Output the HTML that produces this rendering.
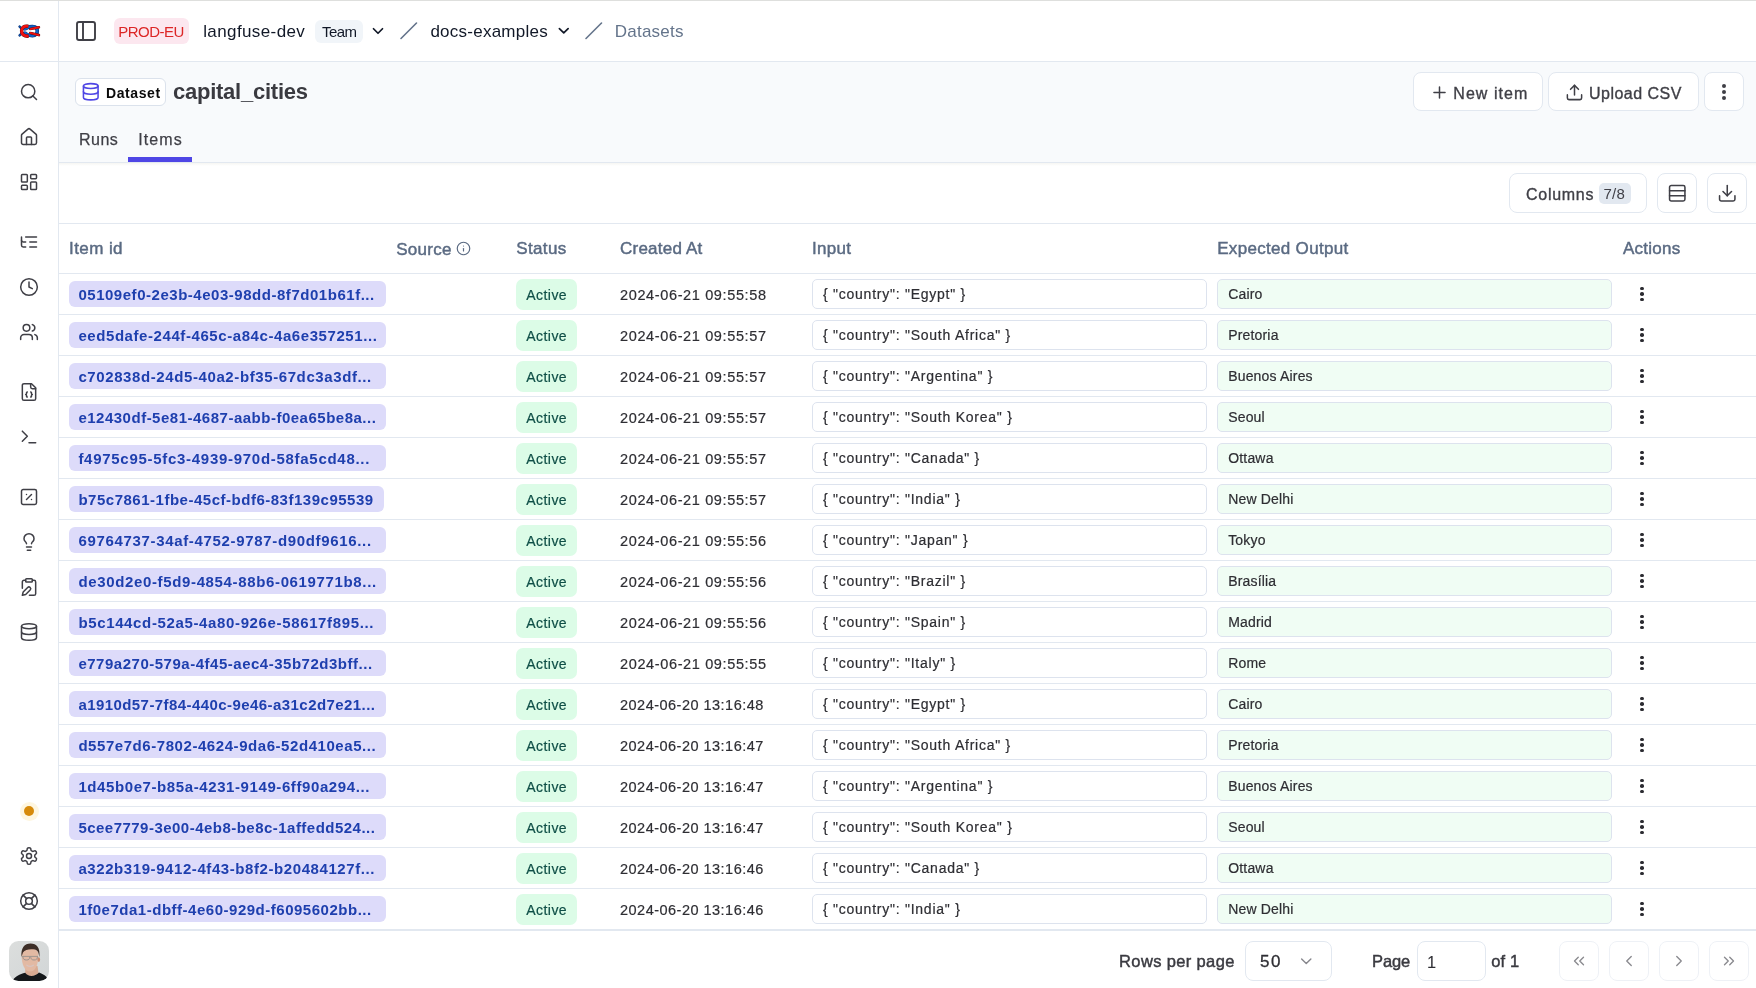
<!DOCTYPE html>
<html><head><meta charset="utf-8"><title>capital_cities - Langfuse</title>
<style>
#root{position:absolute;left:0;top:0;width:1756px;height:988px;will-change:transform}
*{box-sizing:border-box;margin:0;padding:0}
html,body{width:1756px;height:988px;overflow:hidden;background:#fff}
body{position:relative;font-family:"Liberation Sans",sans-serif;color:#2e2e33;-webkit-font-smoothing:antialiased}
.a{position:absolute;white-space:nowrap}
.ic{position:absolute;display:block}
.t{position:absolute;white-space:nowrap;line-height:1}
.box{position:absolute;border:1px solid #e2e8f0;background:#fff}
</style></head><body><div id="root">

<div class="a" style="left:0;top:0;width:1756px;height:1px;background:#dedfdd"></div>
<div class="a" style="left:58px;top:1px;width:1px;height:987px;background:#e2e8f0"></div>
<div class="a" style="left:0;top:61px;width:1756px;height:1px;background:#e2e8f0"></div>
<div class="a" style="left:59px;top:62px;width:1697px;height:100px;background:#f8fafc"></div>
<div class="a" style="left:59px;top:162px;width:1697px;height:1px;background:#e2e8f0"></div>
<div class="a" style="left:59px;top:163px;width:1697px;height:3px;background:linear-gradient(#f6f6f3,#fff)"></div>
<svg class="ic" style="left:16px;top:21px;width:26px;height:20px" viewBox="0 0 26 20">
<path d="M3.6 5.6 5.2 7.2M3.6 14.4 5.2 12.8" stroke="#0b2f6e" stroke-width="2.4" stroke-linecap="round"/>
<path d="M3.6 5.6 5.2 7.2M3.6 14.4 5.2 12.8" stroke="#0d4fa8" stroke-width="1.6" stroke-linecap="round"/>
<path d="M8.3 9.3C9.8 6.3 13 5.6 16.5 5.6 19.6 5.6 21.3 7.4 21.3 10 21.3 12.6 19.6 14.6 16.5 14.6 13 14.6 9.8 13.7 8.3 10.7" fill="none" stroke="#0a2a66" stroke-width="3.6"/>
<path d="M8.3 9.3C9.8 6.3 13 5.6 16.5 5.6 19.6 5.6 21.3 7.4 21.3 10 21.3 12.6 19.6 14.6 16.5 14.6 13 14.6 9.8 13.7 8.3 10.7" fill="none" stroke="#0e62c8" stroke-width="2.7"/>
<path d="M12.3 5.3C8 4.6 5.6 6.6 5.6 10 5.6 13.4 8 15.4 12.6 15.1" fill="none" stroke="#5a0a0a" stroke-width="3.5"/>
<path d="M12.3 5.3C8 4.6 5.6 6.6 5.6 10 5.6 13.4 8 15.4 12.6 15.1" fill="none" stroke="#f01010" stroke-width="2.7"/>
<path d="M14.3 8.1 22.9 6.3M14.3 11.9 22.9 14.1" fill="none" stroke="#5a0a0a" stroke-width="2.6" stroke-linecap="round"/>
<path d="M14.3 8.1 22.9 6.3M14.3 11.9 22.9 14.1" fill="none" stroke="#f01010" stroke-width="1.9" stroke-linecap="round"/>
<path d="M9.2 10H15" stroke="#f4f4f4" stroke-width="1.1"/>
</svg>
<svg class="ic" style="left:74.3px;top:18.8px;width:24px;height:24px" viewBox="0 0 24 24" fill="none" stroke="#3f3f46" stroke-width="1.9" stroke-linecap="round" stroke-linejoin="round" ><rect width="18" height="18" x="3" y="3" rx="2"/><path d="M9 3v18"/></svg>
<div class="a" style="left:114px;top:18px;width:75px;height:26px;background:#fce7ef;border-radius:6px"></div>
<span class="t" id="prod" style="left:118.3px;top:23.6px;letter-spacing:-0.517px;font-size:15px;color:#dc2626">PROD-EU</span>
<span class="t" id="lfdev" style="left:203.2px;top:22.5px;letter-spacing:0.391px;font-size:17px;color:#111827">langfuse-dev</span>
<div class="a" style="left:315px;top:20px;width:48px;height:22.5px;background:#f1f5f9;border-radius:6px"></div>
<span class="t" id="team" style="left:322.0px;top:23.6px;letter-spacing:-0.567px;font-size:15px;color:#111827">Team</span>
<svg class="ic" style="left:368.8px;top:22.2px;width:18px;height:18px" viewBox="0 0 24 24" fill="none" stroke="#111827" stroke-width="2.3" stroke-linecap="round" stroke-linejoin="round" ><path d="m6 9 6 6 6-6"/></svg>
<svg class="ic" style="left:399px;top:21px;width:20px;height:20px" viewBox="0 0 20 20"><path d="M2 17.5 17.5 2" stroke="#64748b" stroke-width="1.6" stroke-linecap="round"/></svg>
<span class="t" id="docs" style="left:430.4px;top:22.8px;letter-spacing:0.25px;font-size:17px;color:#111827">docs-examples</span>
<svg class="ic" style="left:554.55px;top:22.25px;width:17.5px;height:17.5px" viewBox="0 0 24 24" fill="none" stroke="#111827" stroke-width="2.3" stroke-linecap="round" stroke-linejoin="round" ><path d="m6 9 6 6 6-6"/></svg>
<svg class="ic" style="left:584px;top:21px;width:20px;height:20px" viewBox="0 0 20 20"><path d="M2 17.5 17.5 2" stroke="#64748b" stroke-width="1.6" stroke-linecap="round"/></svg>
<span class="t" id="dsets" style="left:614.8px;top:23.0px;letter-spacing:0.229px;font-size:17px;color:#64748b">Datasets</span>
<svg class="ic" style="left:19.0px;top:82.0px;width:20px;height:20px" viewBox="0 0 24 24" fill="none" stroke="#3f3f46" stroke-width="1.8" stroke-linecap="round" stroke-linejoin="round" ><circle cx="11" cy="11" r="8"/><path d="m21 21-4.3-4.3"/></svg>
<svg class="ic" style="left:19.0px;top:126.5px;width:20px;height:20px" viewBox="0 0 24 24" fill="none" stroke="#3f3f46" stroke-width="1.8" stroke-linecap="round" stroke-linejoin="round" ><path d="M15 21v-8a1 1 0 0 0-1-1h-4a1 1 0 0 0-1 1v8"/><path d="M3 10a2 2 0 0 1 .709-1.528l7-5.999a2 2 0 0 1 2.582 0l7 5.999A2 2 0 0 1 21 10v9a2 2 0 0 1-2 2H5a2 2 0 0 1-2-2z"/></svg>
<svg class="ic" style="left:19.0px;top:172.0px;width:20px;height:20px" viewBox="0 0 24 24" fill="none" stroke="#3f3f46" stroke-width="1.8" stroke-linecap="round" stroke-linejoin="round" ><rect width="7" height="9" x="3" y="3" rx="1"/><rect width="7" height="5" x="14" y="3" rx="1"/><rect width="7" height="9" x="14" y="12" rx="1"/><rect width="7" height="5" x="3" y="16" rx="1"/></svg>
<svg class="ic" style="left:19.0px;top:232.0px;width:20px;height:20px" viewBox="0 0 24 24" fill="none" stroke="#3f3f46" stroke-width="1.8" stroke-linecap="round" stroke-linejoin="round" ><path d="M21 12h-8"/><path d="M21 6H8"/><path d="M21 18h-8"/><path d="M3 6v4c0 1.1.9 2 2 2h3"/><path d="M3 10v6c0 1.1.9 2 2 2h3"/></svg>
<svg class="ic" style="left:19.0px;top:277.0px;width:20px;height:20px" viewBox="0 0 24 24" fill="none" stroke="#3f3f46" stroke-width="1.8" stroke-linecap="round" stroke-linejoin="round" ><circle cx="12" cy="12" r="10"/><polyline points="12 6 12 12 16 14"/></svg>
<svg class="ic" style="left:19.0px;top:322.0px;width:20px;height:20px" viewBox="0 0 24 24" fill="none" stroke="#3f3f46" stroke-width="1.8" stroke-linecap="round" stroke-linejoin="round" ><path d="M16 21v-2a4 4 0 0 0-4-4H6a4 4 0 0 0-4 4v2"/><circle cx="9" cy="7" r="4"/><path d="M22 21v-2a4 4 0 0 0-3-3.87"/><path d="M16 3.13a4 4 0 0 1 0 7.75"/></svg>
<svg class="ic" style="left:19.0px;top:382.0px;width:20px;height:20px" viewBox="0 0 24 24" fill="none" stroke="#3f3f46" stroke-width="1.8" stroke-linecap="round" stroke-linejoin="round" ><path d="M15 2H6a2 2 0 0 0-2 2v16a2 2 0 0 0 2 2h12a2 2 0 0 0 2-2V7Z"/><path d="M14 2v4a2 2 0 0 0 2 2h4"/><path d="M10 12a1 1 0 0 0-1 1v1a1 1 0 0 1-1 1 1 1 0 0 1 1 1v1a1 1 0 0 0 1 1"/><path d="M14 18a1 1 0 0 0 1-1v-1a1 1 0 0 1 1-1 1 1 0 0 1-1-1v-1a1 1 0 0 0-1-1"/></svg>
<svg class="ic" style="left:19.0px;top:427.0px;width:20px;height:20px" viewBox="0 0 24 24" fill="none" stroke="#3f3f46" stroke-width="1.8" stroke-linecap="round" stroke-linejoin="round" ><polyline points="4 17 10 11 4 5"/><line x1="12" x2="20" y1="19" y2="19"/></svg>
<svg class="ic" style="left:19.0px;top:487.0px;width:20px;height:20px" viewBox="0 0 24 24" fill="none" stroke="#3f3f46" stroke-width="1.8" stroke-linecap="round" stroke-linejoin="round" ><rect width="18" height="18" x="3" y="3" rx="2"/><path d="m15 9-6 6"/><path d="M9 9h.01"/><path d="M15 15h.01"/></svg>
<svg class="ic" style="left:19.0px;top:532.0px;width:20px;height:20px" viewBox="0 0 24 24" fill="none" stroke="#3f3f46" stroke-width="1.8" stroke-linecap="round" stroke-linejoin="round" ><path d="M15 14c.2-1 .7-1.7 1.5-2.5 1-.9 1.5-2.2 1.5-3.5A6 6 0 0 0 6 8c0 1 .2 2.2 1.5 3.5.7.7 1.3 1.5 1.5 2.5"/><path d="M9 18h6"/><path d="M10 22h4"/></svg>
<svg class="ic" style="left:19.0px;top:577.0px;width:20px;height:20px" viewBox="0 0 24 24" fill="none" stroke="#3f3f46" stroke-width="1.8" stroke-linecap="round" stroke-linejoin="round" ><rect width="8" height="4" x="8" y="2" rx="1"/><path d="M10.4 12.6a2 2 0 0 1 3 3L8 21l-4 1 1-4Z"/><path d="M16 4h2a2 2 0 0 1 2 2v14a2 2 0 0 1-2 2h-5.5"/><path d="M4 13.5V6a2 2 0 0 1 2-2h2"/></svg>
<svg class="ic" style="left:19.0px;top:622.0px;width:20px;height:20px" viewBox="0 0 24 24" fill="none" stroke="#3f3f46" stroke-width="1.8" stroke-linecap="round" stroke-linejoin="round" ><ellipse cx="12" cy="5" rx="9" ry="3"/><path d="M3 5V19A9 3 0 0 0 21 19V5"/><path d="M3 12A9 3 0 0 0 21 12"/></svg>
<svg class="ic" style="left:19.0px;top:846.0px;width:20px;height:20px" viewBox="0 0 24 24" fill="none" stroke="#3f3f46" stroke-width="1.8" stroke-linecap="round" stroke-linejoin="round" ><path d="M12.22 2h-.44a2 2 0 0 0-2 2v.18a2 2 0 0 1-1 1.73l-.43.25a2 2 0 0 1-2 0l-.15-.08a2 2 0 0 0-2.73.73l-.22.38a2 2 0 0 0 .73 2.73l.15.1a2 2 0 0 1 1 1.72v.51a2 2 0 0 1-1 1.74l-.15.09a2 2 0 0 0-.73 2.73l.22.38a2 2 0 0 0 2.73.73l.15-.08a2 2 0 0 1 2 0l.43.25a2 2 0 0 1 1 1.73V20a2 2 0 0 0 2 2h.44a2 2 0 0 0 2-2v-.18a2 2 0 0 1 1-1.73l.43-.25a2 2 0 0 1 2 0l.15.08a2 2 0 0 0 2.73-.73l.22-.39a2 2 0 0 0-.73-2.73l-.15-.08a2 2 0 0 1-1-1.74v-.5a2 2 0 0 1 1-1.74l.15-.09a2 2 0 0 0 .73-2.73l-.22-.38a2 2 0 0 0-2.73-.73l-.15.08a2 2 0 0 1-2 0l-.43-.25a2 2 0 0 1-1-1.73V4a2 2 0 0 0-2-2z"/><circle cx="12" cy="12" r="3"/></svg>
<svg class="ic" style="left:19.0px;top:891.0px;width:20px;height:20px" viewBox="0 0 24 24" fill="none" stroke="#3f3f46" stroke-width="1.8" stroke-linecap="round" stroke-linejoin="round" ><circle cx="12" cy="12" r="10"/><path d="m4.93 4.93 4.24 4.24"/><path d="m14.83 9.17 4.24-4.24"/><path d="m14.83 14.83 4.24 4.24"/><path d="m9.17 14.83-4.24 4.24"/><circle cx="12" cy="12" r="4"/></svg>
<div class="a" style="left:19.5px;top:802px;width:19px;height:19px;border-radius:50%;background:#fef6e0"></div>
<div class="a" style="left:24px;top:806px;width:10px;height:10px;border-radius:50%;background:#d68a0b"></div>
<svg class="ic" style="left:9px;top:941px;width:40px;height:40px" viewBox="0 0 40 40">
<defs><clipPath id="av"><rect width="40" height="40" rx="9.5"/></clipPath>
<linearGradient id="avg" x1="0" y1="0" x2="1" y2="1"><stop offset="0" stop-color="#dcdedd"/><stop offset="1" stop-color="#d2d6d7"/></linearGradient></defs>
<g clip-path="url(#av)">
<rect width="40" height="40" fill="url(#avg)"/>
<path d="M16.5 25 28.5 25 29.5 32C25 36.5 18.5 35.8 16.2 32Z" fill="#d9ab93"/>
<path d="M3 41C5 35.5 10.5 33.5 16.2 31.8 18.5 35.6 25.5 36.6 30 31.6 34 33 37.5 35 40 39L40 41Z" fill="#15181b"/>
<path d="M12.6 14C12.6 24 16 30.6 21 30.6 26.2 30.6 29.4 24 29.4 14 29.4 9 26 7.5 21 7.5 16 7.5 12.6 9 12.6 14Z" fill="#e2b9a3"/>
<ellipse cx="29.8" cy="18.6" rx="1.3" ry="2.4" fill="#c98e74"/>
<path d="M12.5 16C11.6 7 15.6 2.6 21.5 2.6 27.6 2.6 31.4 6.4 30.4 16.5 29.8 12 29 9.4 26 8.6 21.5 7.6 16 8.4 14 11.5 13.4 13 13 14.5 12.5 16Z" fill="#3d2e27"/>
<path d="M13 15.4H29M13.8 15.6C14 18.2 15.2 19 17.6 19 20 19 20.6 18 20.7 15.8M21.7 15.8C21.9 18 22.7 19 25 19 27.6 19 28.3 18 28.5 15.6" fill="none" stroke="#8f8b8a" stroke-width="0.8"/>
<path d="M17.8 24.2C19.5 25.4 22.6 25.4 24.4 24.2" fill="none" stroke="#d9c3bf" stroke-width="1.3" stroke-linecap="round"/>
</g></svg>
<div class="a" style="left:75px;top:78px;width:91px;height:28px;background:#fff;border:1px solid #dbe2ec;border-radius:6px"></div>
<svg class="ic" style="left:81.25px;top:82.15px;width:19.5px;height:19.5px" viewBox="0 0 24 24" fill="none" stroke="#4f46e5" stroke-width="1.9" stroke-linecap="round" stroke-linejoin="round" ><ellipse cx="12" cy="5" rx="9" ry="3"/><path d="M3 5V19A9 3 0 0 0 21 19V5"/><path d="M3 12A9 3 0 0 0 21 12"/></svg>
<span class="t" id="dsbadge" style="left:106.1px;top:86.0px;letter-spacing:0.567px;font-size:14px;font-weight:700;color:#0a0a0a">Dataset</span>
<span class="t" id="title" style="left:173.0px;top:81.1px;letter-spacing:-0.246px;font-size:22px;font-weight:700;color:#3a3a40">capital_cities</span>
<span class="t" id="runs" style="left:79.0px;top:132.4px;letter-spacing:0.5px;font-size:16px;color:#3f3f46;-webkit-text-stroke:0.25px #3f3f46">Runs</span>
<span class="t" id="items" style="left:138.2px;top:132.4px;letter-spacing:1.125px;font-size:16px;color:#3f3f46;-webkit-text-stroke:0.25px #3f3f46">Items</span>
<div class="a" style="left:128px;top:157px;width:64px;height:5px;background:#4f46e5"></div>
<div class="a" style="left:1413px;top:72px;width:130px;height:39px;border:1px solid #e2e8f0;background:#fff;border-radius:8px"></div>
<svg class="ic" style="left:1429.5px;top:82.7px;width:19px;height:19px" viewBox="0 0 24 24" fill="none" stroke="#3f3f46" stroke-width="1.9" stroke-linecap="round" stroke-linejoin="round" ><path d="M5 12h14"/><path d="M12 5v14"/></svg>
<span class="t" id="newitem" style="left:1453.3px;top:85.8px;letter-spacing:1.057px;font-size:16px;color:#3f3f46;-webkit-text-stroke:0.35px #3f3f46">New item</span>
<div class="a" style="left:1548px;top:72px;width:151px;height:39px;border:1px solid #e2e8f0;background:#fff;border-radius:8px"></div>
<svg class="ic" style="left:1564.5px;top:82.5px;width:19px;height:19px" viewBox="0 0 24 24" fill="none" stroke="#3f3f46" stroke-width="1.9" stroke-linecap="round" stroke-linejoin="round" ><path d="M21 15v4a2 2 0 0 1-2 2H5a2 2 0 0 1-2-2v-4"/><polyline points="17 8 12 3 7 8"/><line x1="12" x2="12" y1="3" y2="15"/></svg>
<span class="t" id="upload" style="left:1589.0px;top:85.8px;letter-spacing:0.489px;font-size:16px;color:#3f3f46;-webkit-text-stroke:0.35px #3f3f46">Upload CSV</span>
<div class="a" style="left:1704px;top:72px;width:40px;height:39px;border:1px solid #e2e8f0;background:#fff;border-radius:8px"></div>
<div class="a" style="left:1722px;top:84.0px;width:4px;height:4px;border-radius:50%;background:#3f3f46"></div>
<div class="a" style="left:1722px;top:89.8px;width:4px;height:4px;border-radius:50%;background:#3f3f46"></div>
<div class="a" style="left:1722px;top:95.6px;width:4px;height:4px;border-radius:50%;background:#3f3f46"></div>
<div class="a" style="left:1509px;top:173px;width:138px;height:40px;border:1px solid #e2e8f0;background:#fff;border-radius:8px"></div>
<span class="t" id="columns" style="left:1526.0px;top:186.7px;letter-spacing:0.717px;font-size:16px;color:#3f3f46;-webkit-text-stroke:0.35px #3f3f46">Columns</span>
<div class="a" style="left:1599px;top:183px;width:32px;height:21px;background:#e2e8f0;border-radius:5px"></div>
<span class="t" id="c78" style="left:1603.5px;top:186.3px;letter-spacing:0.25px;font-size:15px;color:#3f3f46">7/8</span>
<div class="a" style="left:1657px;top:173px;width:40px;height:40px;border:1px solid #e2e8f0;background:#fff;border-radius:8px"></div>
<svg class="ic" style="left:1666.75px;top:182.75px;width:20.5px;height:20.5px" viewBox="0 0 24 24" fill="none" stroke="#3f3f46" stroke-width="1.8" stroke-linecap="round" stroke-linejoin="round" ><rect width="18" height="18" x="3" y="3" rx="2"/><path d="M21 9H3"/><path d="M21 15H3"/></svg>
<div class="a" style="left:1707px;top:173px;width:40px;height:40px;border:1px solid #e2e8f0;background:#fff;border-radius:8px"></div>
<svg class="ic" style="left:1716.75px;top:182.75px;width:20.5px;height:20.5px" viewBox="0 0 24 24" fill="none" stroke="#3f3f46" stroke-width="1.8" stroke-linecap="round" stroke-linejoin="round" ><path d="M21 15v4a2 2 0 0 1-2 2H5a2 2 0 0 1-2-2v-4"/><polyline points="7 10 12 15 17 10"/><line x1="12" x2="12" y1="15" y2="3"/></svg>
<div class="a" style="left:59px;top:223px;width:1697px;height:1px;background:#e2e8f0"></div>
<span class="t" id="h_id" style="left:69.1px;top:239.7px;letter-spacing:0.4px;font-size:17px;color:#5a6a82;-webkit-text-stroke:0.45px #5a6a82">Item id</span>
<span class="t" id="h_src" style="left:396.2px;top:240.6px;letter-spacing:0.28px;font-size:17px;color:#5a6a82;-webkit-text-stroke:0.45px #5a6a82">Source</span>
<svg class="ic" style="left:456.0px;top:241.0px;width:15px;height:15px" viewBox="0 0 24 24" fill="none" stroke="#5a6a82" stroke-width="1.9" stroke-linecap="round" stroke-linejoin="round" ><circle cx="12" cy="12" r="10"/><path d="M12 16v-4"/><path d="M12 8h.01"/></svg>
<span class="t" id="h_st" style="left:516.2px;top:240.3px;letter-spacing:0.38px;font-size:17px;color:#5a6a82;-webkit-text-stroke:0.45px #5a6a82">Status</span>
<span class="t" id="h_ca" style="left:620.1px;top:240.3px;letter-spacing:0.211px;font-size:17px;color:#5a6a82;-webkit-text-stroke:0.45px #5a6a82">Created At</span>
<span class="t" id="h_in" style="left:812.0px;top:240.3px;letter-spacing:0.275px;font-size:17px;color:#5a6a82;-webkit-text-stroke:0.45px #5a6a82">Input</span>
<span class="t" id="h_eo" style="left:1217.2px;top:240.1px;letter-spacing:0.314px;font-size:17px;color:#5a6a82;-webkit-text-stroke:0.45px #5a6a82">Expected Output</span>
<span class="t" id="h_ac" style="left:1622.9px;top:239.8px;letter-spacing:0.25px;font-size:17px;color:#5a6a82;-webkit-text-stroke:0.45px #5a6a82">Actions</span>
<div class="a" style="left:59px;top:273px;width:1697px;height:1px;background:#e2e8f0"></div>
<div class="a" style="left:69px;top:281px;width:317px;height:25.5px;background:#dddbfa;border-radius:6px"></div>
<span class="t" id="id0" style="left:78.4px;top:287.0px;letter-spacing:0.528px;font-size:15px;font-weight:700;color:#1e3fae">05109ef0-2e3b-4e03-98dd-8f7d01b61f...</span>
<div class="a" style="left:516px;top:279px;width:61px;height:31px;background:#dcfce7;border-radius:7px"></div>
<span class="t" id="act0" style="left:526.3px;top:288.0px;letter-spacing:0.44px;font-size:14px;color:#0f4f47;-webkit-text-stroke:0.2px #0f4f47">Active</span>
<span class="t" id="dt0" style="left:620.0px;top:287.7px;letter-spacing:0.633px;font-size:14.5px;color:#2e2e33;-webkit-text-stroke:0.2px #2e2e33">2024-06-21 09:55:58</span>
<div class="a" style="left:812px;top:279px;width:394.5px;height:30px;background:#fff;border:1px solid #dde3ee;border-radius:5px"></div>
<span class="t" id="in0" style="left:823.0px;top:287.3px;letter-spacing:0.752px;font-size:14px;color:#2e2e33;-webkit-text-stroke:0.2px #2e2e33">{ "country": "Egypt" }</span>
<div class="a" style="left:1217px;top:279px;width:395px;height:30px;background:#f0fdf4;border:1px solid #dde3ee;border-radius:5px"></div>
<span class="t" id="out0" style="left:1228.2px;top:286.7px;letter-spacing:0.175px;font-size:14px;color:#2e2e33;-webkit-text-stroke:0.2px #2e2e33">Cairo</span>
<div class="a" style="left:1640.2px;top:286.5px;width:3.6px;height:3.6px;border-radius:50%;background:#2b2b31"></div>
<div class="a" style="left:1640.2px;top:292.2px;width:3.6px;height:3.6px;border-radius:50%;background:#2b2b31"></div>
<div class="a" style="left:1640.2px;top:297.9px;width:3.6px;height:3.6px;border-radius:50%;background:#2b2b31"></div>
<div class="a" style="left:59px;top:314px;width:1697px;height:1px;background:#e2e8f0"></div>
<div class="a" style="left:69px;top:322px;width:317px;height:25.5px;background:#dddbfa;border-radius:6px"></div>
<span class="t" id="id1" style="left:78.4px;top:328.0px;letter-spacing:0.576px;font-size:15px;font-weight:700;color:#1e3fae">eed5dafe-244f-465c-a84c-4a6e357251...</span>
<div class="a" style="left:516px;top:320px;width:61px;height:31px;background:#dcfce7;border-radius:7px"></div>
<span class="t" id="act1" style="left:526.3px;top:329.0px;letter-spacing:0.44px;font-size:14px;color:#0f4f47;-webkit-text-stroke:0.2px #0f4f47">Active</span>
<span class="t" id="dt1" style="left:620.0px;top:328.7px;letter-spacing:0.633px;font-size:14.5px;color:#2e2e33;-webkit-text-stroke:0.2px #2e2e33">2024-06-21 09:55:57</span>
<div class="a" style="left:812px;top:320px;width:394.5px;height:30px;background:#fff;border:1px solid #dde3ee;border-radius:5px"></div>
<span class="t" id="in1" style="left:823.0px;top:328.3px;letter-spacing:0.752px;font-size:14px;color:#2e2e33;-webkit-text-stroke:0.2px #2e2e33">{ "country": "South Africa" }</span>
<div class="a" style="left:1217px;top:320px;width:395px;height:30px;background:#f0fdf4;border:1px solid #dde3ee;border-radius:5px"></div>
<span class="t" id="out1" style="left:1228.2px;top:327.7px;letter-spacing:0.175px;font-size:14px;color:#2e2e33;-webkit-text-stroke:0.2px #2e2e33">Pretoria</span>
<div class="a" style="left:1640.2px;top:327.5px;width:3.6px;height:3.6px;border-radius:50%;background:#2b2b31"></div>
<div class="a" style="left:1640.2px;top:333.2px;width:3.6px;height:3.6px;border-radius:50%;background:#2b2b31"></div>
<div class="a" style="left:1640.2px;top:338.9px;width:3.6px;height:3.6px;border-radius:50%;background:#2b2b31"></div>
<div class="a" style="left:59px;top:355px;width:1697px;height:1px;background:#e2e8f0"></div>
<div class="a" style="left:69px;top:363px;width:317px;height:25.5px;background:#dddbfa;border-radius:6px"></div>
<span class="t" id="id2" style="left:78.4px;top:369.0px;letter-spacing:0.6px;font-size:15px;font-weight:700;color:#1e3fae">c702838d-24d5-40a2-bf35-67dc3a3df...</span>
<div class="a" style="left:516px;top:361px;width:61px;height:31px;background:#dcfce7;border-radius:7px"></div>
<span class="t" id="act2" style="left:526.3px;top:370.0px;letter-spacing:0.44px;font-size:14px;color:#0f4f47;-webkit-text-stroke:0.2px #0f4f47">Active</span>
<span class="t" id="dt2" style="left:620.0px;top:369.7px;letter-spacing:0.633px;font-size:14.5px;color:#2e2e33;-webkit-text-stroke:0.2px #2e2e33">2024-06-21 09:55:57</span>
<div class="a" style="left:812px;top:361px;width:394.5px;height:30px;background:#fff;border:1px solid #dde3ee;border-radius:5px"></div>
<span class="t" id="in2" style="left:823.0px;top:369.3px;letter-spacing:0.752px;font-size:14px;color:#2e2e33;-webkit-text-stroke:0.2px #2e2e33">{ "country": "Argentina" }</span>
<div class="a" style="left:1217px;top:361px;width:395px;height:30px;background:#f0fdf4;border:1px solid #dde3ee;border-radius:5px"></div>
<span class="t" id="out2" style="left:1228.2px;top:368.7px;letter-spacing:0.175px;font-size:14px;color:#2e2e33;-webkit-text-stroke:0.2px #2e2e33">Buenos Aires</span>
<div class="a" style="left:1640.2px;top:368.5px;width:3.6px;height:3.6px;border-radius:50%;background:#2b2b31"></div>
<div class="a" style="left:1640.2px;top:374.2px;width:3.6px;height:3.6px;border-radius:50%;background:#2b2b31"></div>
<div class="a" style="left:1640.2px;top:379.9px;width:3.6px;height:3.6px;border-radius:50%;background:#2b2b31"></div>
<div class="a" style="left:59px;top:396px;width:1697px;height:1px;background:#e2e8f0"></div>
<div class="a" style="left:69px;top:404px;width:317px;height:25.5px;background:#dddbfa;border-radius:6px"></div>
<span class="t" id="id3" style="left:78.4px;top:410.0px;letter-spacing:0.503px;font-size:15px;font-weight:700;color:#1e3fae">e12430df-5e81-4687-aabb-f0ea65be8a...</span>
<div class="a" style="left:516px;top:402px;width:61px;height:31px;background:#dcfce7;border-radius:7px"></div>
<span class="t" id="act3" style="left:526.3px;top:411.0px;letter-spacing:0.44px;font-size:14px;color:#0f4f47;-webkit-text-stroke:0.2px #0f4f47">Active</span>
<span class="t" id="dt3" style="left:620.0px;top:410.7px;letter-spacing:0.633px;font-size:14.5px;color:#2e2e33;-webkit-text-stroke:0.2px #2e2e33">2024-06-21 09:55:57</span>
<div class="a" style="left:812px;top:402px;width:394.5px;height:30px;background:#fff;border:1px solid #dde3ee;border-radius:5px"></div>
<span class="t" id="in3" style="left:823.0px;top:410.3px;letter-spacing:0.752px;font-size:14px;color:#2e2e33;-webkit-text-stroke:0.2px #2e2e33">{ "country": "South Korea" }</span>
<div class="a" style="left:1217px;top:402px;width:395px;height:30px;background:#f0fdf4;border:1px solid #dde3ee;border-radius:5px"></div>
<span class="t" id="out3" style="left:1228.2px;top:409.7px;letter-spacing:0.175px;font-size:14px;color:#2e2e33;-webkit-text-stroke:0.2px #2e2e33">Seoul</span>
<div class="a" style="left:1640.2px;top:409.5px;width:3.6px;height:3.6px;border-radius:50%;background:#2b2b31"></div>
<div class="a" style="left:1640.2px;top:415.2px;width:3.6px;height:3.6px;border-radius:50%;background:#2b2b31"></div>
<div class="a" style="left:1640.2px;top:420.9px;width:3.6px;height:3.6px;border-radius:50%;background:#2b2b31"></div>
<div class="a" style="left:59px;top:437px;width:1697px;height:1px;background:#e2e8f0"></div>
<div class="a" style="left:69px;top:445px;width:317px;height:25.5px;background:#dddbfa;border-radius:6px"></div>
<span class="t" id="id4" style="left:78.4px;top:451.0px;letter-spacing:0.714px;font-size:15px;font-weight:700;color:#1e3fae">f4975c95-5fc3-4939-970d-58fa5cd48...</span>
<div class="a" style="left:516px;top:443px;width:61px;height:31px;background:#dcfce7;border-radius:7px"></div>
<span class="t" id="act4" style="left:526.3px;top:452.0px;letter-spacing:0.44px;font-size:14px;color:#0f4f47;-webkit-text-stroke:0.2px #0f4f47">Active</span>
<span class="t" id="dt4" style="left:620.0px;top:451.7px;letter-spacing:0.633px;font-size:14.5px;color:#2e2e33;-webkit-text-stroke:0.2px #2e2e33">2024-06-21 09:55:57</span>
<div class="a" style="left:812px;top:443px;width:394.5px;height:30px;background:#fff;border:1px solid #dde3ee;border-radius:5px"></div>
<span class="t" id="in4" style="left:823.0px;top:451.3px;letter-spacing:0.752px;font-size:14px;color:#2e2e33;-webkit-text-stroke:0.2px #2e2e33">{ "country": "Canada" }</span>
<div class="a" style="left:1217px;top:443px;width:395px;height:30px;background:#f0fdf4;border:1px solid #dde3ee;border-radius:5px"></div>
<span class="t" id="out4" style="left:1228.2px;top:450.7px;letter-spacing:0.175px;font-size:14px;color:#2e2e33;-webkit-text-stroke:0.2px #2e2e33">Ottawa</span>
<div class="a" style="left:1640.2px;top:450.5px;width:3.6px;height:3.6px;border-radius:50%;background:#2b2b31"></div>
<div class="a" style="left:1640.2px;top:456.2px;width:3.6px;height:3.6px;border-radius:50%;background:#2b2b31"></div>
<div class="a" style="left:1640.2px;top:461.9px;width:3.6px;height:3.6px;border-radius:50%;background:#2b2b31"></div>
<div class="a" style="left:59px;top:478px;width:1697px;height:1px;background:#e2e8f0"></div>
<div class="a" style="left:69px;top:486px;width:315px;height:25.5px;background:#dddbfa;border-radius:6px"></div>
<span class="t" id="id5" style="left:78.4px;top:492.0px;letter-spacing:0.513px;font-size:15px;font-weight:700;color:#1e3fae">b75c7861-1fbe-45cf-bdf6-83f139c95539</span>
<div class="a" style="left:516px;top:484px;width:61px;height:31px;background:#dcfce7;border-radius:7px"></div>
<span class="t" id="act5" style="left:526.3px;top:493.0px;letter-spacing:0.44px;font-size:14px;color:#0f4f47;-webkit-text-stroke:0.2px #0f4f47">Active</span>
<span class="t" id="dt5" style="left:620.0px;top:492.7px;letter-spacing:0.633px;font-size:14.5px;color:#2e2e33;-webkit-text-stroke:0.2px #2e2e33">2024-06-21 09:55:57</span>
<div class="a" style="left:812px;top:484px;width:394.5px;height:30px;background:#fff;border:1px solid #dde3ee;border-radius:5px"></div>
<span class="t" id="in5" style="left:823.0px;top:492.3px;letter-spacing:0.752px;font-size:14px;color:#2e2e33;-webkit-text-stroke:0.2px #2e2e33">{ "country": "India" }</span>
<div class="a" style="left:1217px;top:484px;width:395px;height:30px;background:#f0fdf4;border:1px solid #dde3ee;border-radius:5px"></div>
<span class="t" id="out5" style="left:1228.2px;top:491.7px;letter-spacing:0.175px;font-size:14px;color:#2e2e33;-webkit-text-stroke:0.2px #2e2e33">New Delhi</span>
<div class="a" style="left:1640.2px;top:491.5px;width:3.6px;height:3.6px;border-radius:50%;background:#2b2b31"></div>
<div class="a" style="left:1640.2px;top:497.2px;width:3.6px;height:3.6px;border-radius:50%;background:#2b2b31"></div>
<div class="a" style="left:1640.2px;top:502.9px;width:3.6px;height:3.6px;border-radius:50%;background:#2b2b31"></div>
<div class="a" style="left:59px;top:519px;width:1697px;height:1px;background:#e2e8f0"></div>
<div class="a" style="left:69px;top:527px;width:317px;height:25.5px;background:#dddbfa;border-radius:6px"></div>
<span class="t" id="id6" style="left:78.4px;top:533.0px;letter-spacing:0.668px;font-size:15px;font-weight:700;color:#1e3fae">69764737-34af-4752-9787-d90df9616...</span>
<div class="a" style="left:516px;top:525px;width:61px;height:31px;background:#dcfce7;border-radius:7px"></div>
<span class="t" id="act6" style="left:526.3px;top:534.0px;letter-spacing:0.44px;font-size:14px;color:#0f4f47;-webkit-text-stroke:0.2px #0f4f47">Active</span>
<span class="t" id="dt6" style="left:620.0px;top:533.7px;letter-spacing:0.633px;font-size:14.5px;color:#2e2e33;-webkit-text-stroke:0.2px #2e2e33">2024-06-21 09:55:56</span>
<div class="a" style="left:812px;top:525px;width:394.5px;height:30px;background:#fff;border:1px solid #dde3ee;border-radius:5px"></div>
<span class="t" id="in6" style="left:823.0px;top:533.3px;letter-spacing:0.752px;font-size:14px;color:#2e2e33;-webkit-text-stroke:0.2px #2e2e33">{ "country": "Japan" }</span>
<div class="a" style="left:1217px;top:525px;width:395px;height:30px;background:#f0fdf4;border:1px solid #dde3ee;border-radius:5px"></div>
<span class="t" id="out6" style="left:1228.2px;top:532.7px;letter-spacing:0.175px;font-size:14px;color:#2e2e33;-webkit-text-stroke:0.2px #2e2e33">Tokyo</span>
<div class="a" style="left:1640.2px;top:532.5px;width:3.6px;height:3.6px;border-radius:50%;background:#2b2b31"></div>
<div class="a" style="left:1640.2px;top:538.2px;width:3.6px;height:3.6px;border-radius:50%;background:#2b2b31"></div>
<div class="a" style="left:1640.2px;top:543.9px;width:3.6px;height:3.6px;border-radius:50%;background:#2b2b31"></div>
<div class="a" style="left:59px;top:560px;width:1697px;height:1px;background:#e2e8f0"></div>
<div class="a" style="left:69px;top:568px;width:317px;height:25.5px;background:#dddbfa;border-radius:6px"></div>
<span class="t" id="id7" style="left:78.4px;top:574.0px;letter-spacing:0.645px;font-size:15px;font-weight:700;color:#1e3fae">de30d2e0-f5d9-4854-88b6-0619771b8...</span>
<div class="a" style="left:516px;top:566px;width:61px;height:31px;background:#dcfce7;border-radius:7px"></div>
<span class="t" id="act7" style="left:526.3px;top:575.0px;letter-spacing:0.44px;font-size:14px;color:#0f4f47;-webkit-text-stroke:0.2px #0f4f47">Active</span>
<span class="t" id="dt7" style="left:620.0px;top:574.7px;letter-spacing:0.633px;font-size:14.5px;color:#2e2e33;-webkit-text-stroke:0.2px #2e2e33">2024-06-21 09:55:56</span>
<div class="a" style="left:812px;top:566px;width:394.5px;height:30px;background:#fff;border:1px solid #dde3ee;border-radius:5px"></div>
<span class="t" id="in7" style="left:823.0px;top:574.3px;letter-spacing:0.752px;font-size:14px;color:#2e2e33;-webkit-text-stroke:0.2px #2e2e33">{ "country": "Brazil" }</span>
<div class="a" style="left:1217px;top:566px;width:395px;height:30px;background:#f0fdf4;border:1px solid #dde3ee;border-radius:5px"></div>
<span class="t" id="out7" style="left:1228.2px;top:573.7px;letter-spacing:0.175px;font-size:14px;color:#2e2e33;-webkit-text-stroke:0.2px #2e2e33">Brasília</span>
<div class="a" style="left:1640.2px;top:573.5px;width:3.6px;height:3.6px;border-radius:50%;background:#2b2b31"></div>
<div class="a" style="left:1640.2px;top:579.2px;width:3.6px;height:3.6px;border-radius:50%;background:#2b2b31"></div>
<div class="a" style="left:1640.2px;top:584.9px;width:3.6px;height:3.6px;border-radius:50%;background:#2b2b31"></div>
<div class="a" style="left:59px;top:601px;width:1697px;height:1px;background:#e2e8f0"></div>
<div class="a" style="left:69px;top:609px;width:317px;height:25.5px;background:#dddbfa;border-radius:6px"></div>
<span class="t" id="id8" style="left:78.4px;top:615.0px;letter-spacing:0.639px;font-size:15px;font-weight:700;color:#1e3fae">b5c144cd-52a5-4a80-926e-58617f895...</span>
<div class="a" style="left:516px;top:607px;width:61px;height:31px;background:#dcfce7;border-radius:7px"></div>
<span class="t" id="act8" style="left:526.3px;top:616.0px;letter-spacing:0.44px;font-size:14px;color:#0f4f47;-webkit-text-stroke:0.2px #0f4f47">Active</span>
<span class="t" id="dt8" style="left:620.0px;top:615.7px;letter-spacing:0.633px;font-size:14.5px;color:#2e2e33;-webkit-text-stroke:0.2px #2e2e33">2024-06-21 09:55:56</span>
<div class="a" style="left:812px;top:607px;width:394.5px;height:30px;background:#fff;border:1px solid #dde3ee;border-radius:5px"></div>
<span class="t" id="in8" style="left:823.0px;top:615.3px;letter-spacing:0.752px;font-size:14px;color:#2e2e33;-webkit-text-stroke:0.2px #2e2e33">{ "country": "Spain" }</span>
<div class="a" style="left:1217px;top:607px;width:395px;height:30px;background:#f0fdf4;border:1px solid #dde3ee;border-radius:5px"></div>
<span class="t" id="out8" style="left:1228.2px;top:614.7px;letter-spacing:0.175px;font-size:14px;color:#2e2e33;-webkit-text-stroke:0.2px #2e2e33">Madrid</span>
<div class="a" style="left:1640.2px;top:614.5px;width:3.6px;height:3.6px;border-radius:50%;background:#2b2b31"></div>
<div class="a" style="left:1640.2px;top:620.2px;width:3.6px;height:3.6px;border-radius:50%;background:#2b2b31"></div>
<div class="a" style="left:1640.2px;top:625.9px;width:3.6px;height:3.6px;border-radius:50%;background:#2b2b31"></div>
<div class="a" style="left:59px;top:642px;width:1697px;height:1px;background:#e2e8f0"></div>
<div class="a" style="left:69px;top:650px;width:317px;height:25.5px;background:#dddbfa;border-radius:6px"></div>
<span class="t" id="id9" style="left:78.4px;top:656.0px;letter-spacing:0.514px;font-size:15px;font-weight:700;color:#1e3fae">e779a270-579a-4f45-aec4-35b72d3bff...</span>
<div class="a" style="left:516px;top:648px;width:61px;height:31px;background:#dcfce7;border-radius:7px"></div>
<span class="t" id="act9" style="left:526.3px;top:657.0px;letter-spacing:0.44px;font-size:14px;color:#0f4f47;-webkit-text-stroke:0.2px #0f4f47">Active</span>
<span class="t" id="dt9" style="left:620.0px;top:656.7px;letter-spacing:0.633px;font-size:14.5px;color:#2e2e33;-webkit-text-stroke:0.2px #2e2e33">2024-06-21 09:55:55</span>
<div class="a" style="left:812px;top:648px;width:394.5px;height:30px;background:#fff;border:1px solid #dde3ee;border-radius:5px"></div>
<span class="t" id="in9" style="left:823.0px;top:656.3px;letter-spacing:0.752px;font-size:14px;color:#2e2e33;-webkit-text-stroke:0.2px #2e2e33">{ "country": "Italy" }</span>
<div class="a" style="left:1217px;top:648px;width:395px;height:30px;background:#f0fdf4;border:1px solid #dde3ee;border-radius:5px"></div>
<span class="t" id="out9" style="left:1228.2px;top:655.7px;letter-spacing:0.175px;font-size:14px;color:#2e2e33;-webkit-text-stroke:0.2px #2e2e33">Rome</span>
<div class="a" style="left:1640.2px;top:655.5px;width:3.6px;height:3.6px;border-radius:50%;background:#2b2b31"></div>
<div class="a" style="left:1640.2px;top:661.2px;width:3.6px;height:3.6px;border-radius:50%;background:#2b2b31"></div>
<div class="a" style="left:1640.2px;top:666.9px;width:3.6px;height:3.6px;border-radius:50%;background:#2b2b31"></div>
<div class="a" style="left:59px;top:683px;width:1697px;height:1px;background:#e2e8f0"></div>
<div class="a" style="left:69px;top:691px;width:317px;height:25.5px;background:#dddbfa;border-radius:6px"></div>
<span class="t" id="id10" style="left:78.4px;top:697.0px;letter-spacing:0.431px;font-size:15px;font-weight:700;color:#1e3fae">a1910d57-7f84-440c-9e46-a31c2d7e21...</span>
<div class="a" style="left:516px;top:689px;width:61px;height:31px;background:#dcfce7;border-radius:7px"></div>
<span class="t" id="act10" style="left:526.3px;top:698.0px;letter-spacing:0.44px;font-size:14px;color:#0f4f47;-webkit-text-stroke:0.2px #0f4f47">Active</span>
<span class="t" id="dt10" style="left:620.0px;top:697.7px;letter-spacing:0.483px;font-size:14.5px;color:#2e2e33;-webkit-text-stroke:0.2px #2e2e33">2024-06-20 13:16:48</span>
<div class="a" style="left:812px;top:689px;width:394.5px;height:30px;background:#fff;border:1px solid #dde3ee;border-radius:5px"></div>
<span class="t" id="in10" style="left:823.0px;top:697.3px;letter-spacing:0.752px;font-size:14px;color:#2e2e33;-webkit-text-stroke:0.2px #2e2e33">{ "country": "Egypt" }</span>
<div class="a" style="left:1217px;top:689px;width:395px;height:30px;background:#f0fdf4;border:1px solid #dde3ee;border-radius:5px"></div>
<span class="t" id="out10" style="left:1228.2px;top:696.7px;letter-spacing:0.175px;font-size:14px;color:#2e2e33;-webkit-text-stroke:0.2px #2e2e33">Cairo</span>
<div class="a" style="left:1640.2px;top:696.5px;width:3.6px;height:3.6px;border-radius:50%;background:#2b2b31"></div>
<div class="a" style="left:1640.2px;top:702.2px;width:3.6px;height:3.6px;border-radius:50%;background:#2b2b31"></div>
<div class="a" style="left:1640.2px;top:707.9px;width:3.6px;height:3.6px;border-radius:50%;background:#2b2b31"></div>
<div class="a" style="left:59px;top:724px;width:1697px;height:1px;background:#e2e8f0"></div>
<div class="a" style="left:69px;top:732px;width:317px;height:25.5px;background:#dddbfa;border-radius:6px"></div>
<span class="t" id="id11" style="left:78.4px;top:738.0px;letter-spacing:0.56px;font-size:15px;font-weight:700;color:#1e3fae">d557e7d6-7802-4624-9da6-52d410ea5...</span>
<div class="a" style="left:516px;top:730px;width:61px;height:31px;background:#dcfce7;border-radius:7px"></div>
<span class="t" id="act11" style="left:526.3px;top:739.0px;letter-spacing:0.44px;font-size:14px;color:#0f4f47;-webkit-text-stroke:0.2px #0f4f47">Active</span>
<span class="t" id="dt11" style="left:620.0px;top:738.7px;letter-spacing:0.483px;font-size:14.5px;color:#2e2e33;-webkit-text-stroke:0.2px #2e2e33">2024-06-20 13:16:47</span>
<div class="a" style="left:812px;top:730px;width:394.5px;height:30px;background:#fff;border:1px solid #dde3ee;border-radius:5px"></div>
<span class="t" id="in11" style="left:823.0px;top:738.3px;letter-spacing:0.752px;font-size:14px;color:#2e2e33;-webkit-text-stroke:0.2px #2e2e33">{ "country": "South Africa" }</span>
<div class="a" style="left:1217px;top:730px;width:395px;height:30px;background:#f0fdf4;border:1px solid #dde3ee;border-radius:5px"></div>
<span class="t" id="out11" style="left:1228.2px;top:737.7px;letter-spacing:0.175px;font-size:14px;color:#2e2e33;-webkit-text-stroke:0.2px #2e2e33">Pretoria</span>
<div class="a" style="left:1640.2px;top:737.5px;width:3.6px;height:3.6px;border-radius:50%;background:#2b2b31"></div>
<div class="a" style="left:1640.2px;top:743.2px;width:3.6px;height:3.6px;border-radius:50%;background:#2b2b31"></div>
<div class="a" style="left:1640.2px;top:748.9px;width:3.6px;height:3.6px;border-radius:50%;background:#2b2b31"></div>
<div class="a" style="left:59px;top:765px;width:1697px;height:1px;background:#e2e8f0"></div>
<div class="a" style="left:69px;top:773px;width:317px;height:25.5px;background:#dddbfa;border-radius:6px"></div>
<span class="t" id="id12" style="left:78.4px;top:779.0px;letter-spacing:0.594px;font-size:15px;font-weight:700;color:#1e3fae">1d45b0e7-b85a-4231-9149-6ff90a294...</span>
<div class="a" style="left:516px;top:771px;width:61px;height:31px;background:#dcfce7;border-radius:7px"></div>
<span class="t" id="act12" style="left:526.3px;top:780.0px;letter-spacing:0.44px;font-size:14px;color:#0f4f47;-webkit-text-stroke:0.2px #0f4f47">Active</span>
<span class="t" id="dt12" style="left:620.0px;top:779.7px;letter-spacing:0.483px;font-size:14.5px;color:#2e2e33;-webkit-text-stroke:0.2px #2e2e33">2024-06-20 13:16:47</span>
<div class="a" style="left:812px;top:771px;width:394.5px;height:30px;background:#fff;border:1px solid #dde3ee;border-radius:5px"></div>
<span class="t" id="in12" style="left:823.0px;top:779.3px;letter-spacing:0.752px;font-size:14px;color:#2e2e33;-webkit-text-stroke:0.2px #2e2e33">{ "country": "Argentina" }</span>
<div class="a" style="left:1217px;top:771px;width:395px;height:30px;background:#f0fdf4;border:1px solid #dde3ee;border-radius:5px"></div>
<span class="t" id="out12" style="left:1228.2px;top:778.7px;letter-spacing:0.175px;font-size:14px;color:#2e2e33;-webkit-text-stroke:0.2px #2e2e33">Buenos Aires</span>
<div class="a" style="left:1640.2px;top:778.5px;width:3.6px;height:3.6px;border-radius:50%;background:#2b2b31"></div>
<div class="a" style="left:1640.2px;top:784.2px;width:3.6px;height:3.6px;border-radius:50%;background:#2b2b31"></div>
<div class="a" style="left:1640.2px;top:789.9px;width:3.6px;height:3.6px;border-radius:50%;background:#2b2b31"></div>
<div class="a" style="left:59px;top:806px;width:1697px;height:1px;background:#e2e8f0"></div>
<div class="a" style="left:69px;top:814px;width:317px;height:25.5px;background:#dddbfa;border-radius:6px"></div>
<span class="t" id="id13" style="left:78.4px;top:820.0px;letter-spacing:0.475px;font-size:15px;font-weight:700;color:#1e3fae">5cee7779-3e00-4eb8-be8c-1affedd524...</span>
<div class="a" style="left:516px;top:812px;width:61px;height:31px;background:#dcfce7;border-radius:7px"></div>
<span class="t" id="act13" style="left:526.3px;top:821.0px;letter-spacing:0.44px;font-size:14px;color:#0f4f47;-webkit-text-stroke:0.2px #0f4f47">Active</span>
<span class="t" id="dt13" style="left:620.0px;top:820.7px;letter-spacing:0.483px;font-size:14.5px;color:#2e2e33;-webkit-text-stroke:0.2px #2e2e33">2024-06-20 13:16:47</span>
<div class="a" style="left:812px;top:812px;width:394.5px;height:30px;background:#fff;border:1px solid #dde3ee;border-radius:5px"></div>
<span class="t" id="in13" style="left:823.0px;top:820.3px;letter-spacing:0.752px;font-size:14px;color:#2e2e33;-webkit-text-stroke:0.2px #2e2e33">{ "country": "South Korea" }</span>
<div class="a" style="left:1217px;top:812px;width:395px;height:30px;background:#f0fdf4;border:1px solid #dde3ee;border-radius:5px"></div>
<span class="t" id="out13" style="left:1228.2px;top:819.7px;letter-spacing:0.175px;font-size:14px;color:#2e2e33;-webkit-text-stroke:0.2px #2e2e33">Seoul</span>
<div class="a" style="left:1640.2px;top:819.5px;width:3.6px;height:3.6px;border-radius:50%;background:#2b2b31"></div>
<div class="a" style="left:1640.2px;top:825.2px;width:3.6px;height:3.6px;border-radius:50%;background:#2b2b31"></div>
<div class="a" style="left:1640.2px;top:830.9px;width:3.6px;height:3.6px;border-radius:50%;background:#2b2b31"></div>
<div class="a" style="left:59px;top:847px;width:1697px;height:1px;background:#e2e8f0"></div>
<div class="a" style="left:69px;top:855px;width:317px;height:25.5px;background:#dddbfa;border-radius:6px"></div>
<span class="t" id="id14" style="left:78.4px;top:861.0px;letter-spacing:0.58px;font-size:15px;font-weight:700;color:#1e3fae">a322b319-9412-4f43-b8f2-b20484127f...</span>
<div class="a" style="left:516px;top:853px;width:61px;height:31px;background:#dcfce7;border-radius:7px"></div>
<span class="t" id="act14" style="left:526.3px;top:862.0px;letter-spacing:0.44px;font-size:14px;color:#0f4f47;-webkit-text-stroke:0.2px #0f4f47">Active</span>
<span class="t" id="dt14" style="left:620.0px;top:861.7px;letter-spacing:0.483px;font-size:14.5px;color:#2e2e33;-webkit-text-stroke:0.2px #2e2e33">2024-06-20 13:16:46</span>
<div class="a" style="left:812px;top:853px;width:394.5px;height:30px;background:#fff;border:1px solid #dde3ee;border-radius:5px"></div>
<span class="t" id="in14" style="left:823.0px;top:861.3px;letter-spacing:0.752px;font-size:14px;color:#2e2e33;-webkit-text-stroke:0.2px #2e2e33">{ "country": "Canada" }</span>
<div class="a" style="left:1217px;top:853px;width:395px;height:30px;background:#f0fdf4;border:1px solid #dde3ee;border-radius:5px"></div>
<span class="t" id="out14" style="left:1228.2px;top:860.7px;letter-spacing:0.175px;font-size:14px;color:#2e2e33;-webkit-text-stroke:0.2px #2e2e33">Ottawa</span>
<div class="a" style="left:1640.2px;top:860.5px;width:3.6px;height:3.6px;border-radius:50%;background:#2b2b31"></div>
<div class="a" style="left:1640.2px;top:866.2px;width:3.6px;height:3.6px;border-radius:50%;background:#2b2b31"></div>
<div class="a" style="left:1640.2px;top:871.9px;width:3.6px;height:3.6px;border-radius:50%;background:#2b2b31"></div>
<div class="a" style="left:59px;top:888px;width:1697px;height:1px;background:#e2e8f0"></div>
<div class="a" style="left:69px;top:896px;width:317px;height:25.5px;background:#dddbfa;border-radius:6px"></div>
<span class="t" id="id15" style="left:78.4px;top:902.0px;letter-spacing:0.514px;font-size:15px;font-weight:700;color:#1e3fae">1f0e7da1-dbff-4e60-929d-f6095602bb...</span>
<div class="a" style="left:516px;top:894px;width:61px;height:31px;background:#dcfce7;border-radius:7px"></div>
<span class="t" id="act15" style="left:526.3px;top:903.0px;letter-spacing:0.44px;font-size:14px;color:#0f4f47;-webkit-text-stroke:0.2px #0f4f47">Active</span>
<span class="t" id="dt15" style="left:620.0px;top:902.7px;letter-spacing:0.483px;font-size:14.5px;color:#2e2e33;-webkit-text-stroke:0.2px #2e2e33">2024-06-20 13:16:46</span>
<div class="a" style="left:812px;top:894px;width:394.5px;height:30px;background:#fff;border:1px solid #dde3ee;border-radius:5px"></div>
<span class="t" id="in15" style="left:823.0px;top:902.3px;letter-spacing:0.752px;font-size:14px;color:#2e2e33;-webkit-text-stroke:0.2px #2e2e33">{ "country": "India" }</span>
<div class="a" style="left:1217px;top:894px;width:395px;height:30px;background:#f0fdf4;border:1px solid #dde3ee;border-radius:5px"></div>
<span class="t" id="out15" style="left:1228.2px;top:901.7px;letter-spacing:0.175px;font-size:14px;color:#2e2e33;-webkit-text-stroke:0.2px #2e2e33">New Delhi</span>
<div class="a" style="left:1640.2px;top:901.5px;width:3.6px;height:3.6px;border-radius:50%;background:#2b2b31"></div>
<div class="a" style="left:1640.2px;top:907.2px;width:3.6px;height:3.6px;border-radius:50%;background:#2b2b31"></div>
<div class="a" style="left:1640.2px;top:912.9px;width:3.6px;height:3.6px;border-radius:50%;background:#2b2b31"></div>
<div class="a" style="left:59px;top:929px;width:1697px;height:1px;background:#e2e8f0"></div>
<div class="a" style="left:59px;top:929px;width:1697px;height:2px;background:#e2e8f0"></div>
<span class="t" id="rpp" style="left:1119.1px;top:953.1px;letter-spacing:0.358px;font-size:16.5px;color:#3a3a40;-webkit-text-stroke:0.45px #3a3a40">Rows per page</span>
<div class="a" style="left:1244.5px;top:941px;width:87.0px;height:39.5px;border:1px solid #e2e8f0;background:#fff;border-radius:8px"></div>
<span class="t" id="fifty" style="left:1259.9px;top:952.9px;letter-spacing:1.6px;font-size:17px;color:#2e2e33;-webkit-text-stroke:0.3px #2e2e33">50</span>
<svg class="ic" style="left:1296.75px;top:951.55px;width:18.5px;height:18.5px" viewBox="0 0 24 24" fill="none" stroke="#86868c" stroke-width="1.8" stroke-linecap="round" stroke-linejoin="round" ><path d="m6 9 6 6 6-6"/></svg>
<span class="t" id="page" style="left:1372.0px;top:953.2px;letter-spacing:-0.1px;font-size:16.5px;color:#3a3a40;-webkit-text-stroke:0.45px #3a3a40">Page</span>
<div class="a" style="left:1416.5px;top:941px;width:69.0px;height:39.5px;border:1px solid #e2e8f0;background:#fff;border-radius:8px"></div>
<span class="t" id="one" style="left:1427.1px;top:954.2px;letter-spacing:0.0px;font-size:16.5px;color:#2e2e33">1</span>
<span class="t" id="of1" style="left:1491.3px;top:953.2px;letter-spacing:0.133px;font-size:16.5px;color:#3a3a40;-webkit-text-stroke:0.45px #3a3a40">of 1</span>
<div class="a" style="left:1559px;top:941px;width:39.5px;height:39.5px;border:1px solid #eef1f6;background:#fff;border-radius:8px"></div>
<svg class="ic" style="left:1569.75px;top:952.0px;width:18px;height:18px" viewBox="0 0 24 24" fill="none" stroke="#8a8a8f" stroke-width="1.8" stroke-linecap="round" stroke-linejoin="round" ><path d="m11 17-5-5 5-5"/><path d="m18 17-5-5 5-5"/></svg>
<div class="a" style="left:1609px;top:941px;width:39.5px;height:39.5px;border:1px solid #eef1f6;background:#fff;border-radius:8px"></div>
<svg class="ic" style="left:1619.75px;top:952.0px;width:18px;height:18px" viewBox="0 0 24 24" fill="none" stroke="#8a8a8f" stroke-width="1.8" stroke-linecap="round" stroke-linejoin="round" ><path d="m15 18-6-6 6-6"/></svg>
<div class="a" style="left:1659px;top:941px;width:39.5px;height:39.5px;border:1px solid #eef1f6;background:#fff;border-radius:8px"></div>
<svg class="ic" style="left:1669.75px;top:952.0px;width:18px;height:18px" viewBox="0 0 24 24" fill="none" stroke="#8a8a8f" stroke-width="1.8" stroke-linecap="round" stroke-linejoin="round" ><path d="m9 18 6-6-6-6"/></svg>
<div class="a" style="left:1709px;top:941px;width:39.5px;height:39.5px;border:1px solid #eef1f6;background:#fff;border-radius:8px"></div>
<svg class="ic" style="left:1719.75px;top:952.0px;width:18px;height:18px" viewBox="0 0 24 24" fill="none" stroke="#8a8a8f" stroke-width="1.8" stroke-linecap="round" stroke-linejoin="round" ><path d="m6 17 5-5-5-5"/><path d="m13 17 5-5-5-5"/></svg>
</div></body></html>
